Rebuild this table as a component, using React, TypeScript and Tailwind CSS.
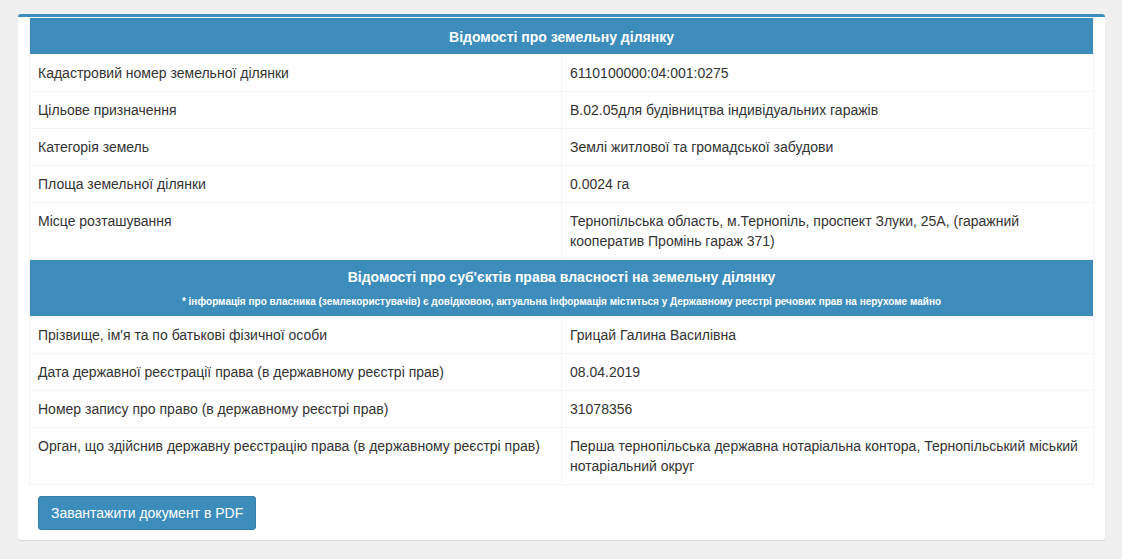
import React from "react";

const rows1: [string, React.ReactNode][] = [
  ["Кадастровий номер земельної ділянки", "6110100000:04:001:0275"],
  ["Цільове призначення", "В.02.05для будівництва індивідуальних гаражів"],
  ["Категорія земель", "Землі житлової та громадської забудови"],
  ["Площа земельної ділянки", "0.0024 га"],
  [
    "Місце розташування",
    "Тернопільська область, м.Тернопіль, проспект Злуки, 25А, (гаражний кооператив Промінь гараж 371)",
  ],
];

const rows2: [string, React.ReactNode][] = [
  ["Прізвище, ім'я та по батькові фізичної особи", "Грицай Галина Василівна"],
  ["Дата державної реєстрації права (в державному реєстрі прав)", "08.04.2019"],
  ["Номер запису про право (в державному реєстрі прав)", "31078356"],
  [
    "Орган, що здійснив державну реєстрацію права (в державному реєстрі прав)",
    "Перша тернопільська державна нотаріальна контора, Тернопільський міський нотаріальний округ",
  ],
];

function Row({ k, v }: { k: string; v: React.ReactNode }) {
  return (
    <tr>
      <td className="border border-[#f4f4f4] px-2 py-2 align-top leading-5 w-[532px]">{k}</td>
      <td className="border border-[#f4f4f4] px-2 py-2 align-top leading-5">{v}</td>
    </tr>
  );
}

export default function App() {
  return (
    <div
      className="w-[1122px] h-[559px] bg-[#f0f0f0] pt-[14px] pl-[18px] text-[14px] text-[#333]"
      style={{ fontFamily: '"Liberation Sans", Arial, sans-serif' }}
    >
      <div className="w-[1087px] bg-white rounded-[3px] border-t-[3px] border-[#3c8dbc] shadow-[0_1px_1px_rgba(0,0,0,0.1)] px-[11px] pb-[10px]">
        <table className="w-full border-collapse border border-[#f4f4f4]">
          <tbody>
            <tr>
              <td colSpan={2} className="bg-[#3c8dbc] text-white font-bold text-center h-[37px] text-[14px] leading-5 px-2 pt-[9px] pb-[7px]">
                Відомості про земельну ділянку
              </td>
            </tr>
            {rows1.map(([k, v]) => (
              <Row key={k} k={k} v={v} />
            ))}
            <tr>
              <td colSpan={2} className="bg-[#3c8dbc] text-white font-bold text-center px-2 pt-[7px] pb-[8px]">
                <div className="text-[14px] leading-5">Відомості про суб'єктів права власності на земельну ділянку</div>
                <div className="text-[10px] leading-[13px] mt-[8px]">
                  * інформація про власника (землекористувачів) є довідковою, актуальна інформація міститься у Державному реєстрі речових прав на нерухоме майно
                </div>
              </td>
            </tr>
            {rows2.map(([k, v]) => (
              <Row key={k} k={k} v={v} />
            ))}
          </tbody>
        </table>
        <div className="pt-[11px] pl-[9px]">
          <button className="h-[34px] px-[12px] bg-[#3c8dbc] border border-[#367fa9] rounded-[3px] text-white text-[14px]">
            Завантажити документ в PDF
          </button>
        </div>
      </div>
    </div>
  );
}
